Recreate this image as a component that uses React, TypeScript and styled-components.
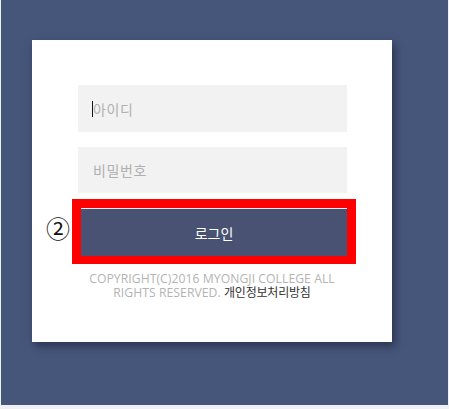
import React from "react";
import styled, { createGlobalStyle } from "styled-components";

const Global = createGlobalStyle`
  html, body { margin: 0; padding: 0; background: #eef0f4; }
  body { font-family: "Noto Sans CJK KR", "Noto Sans", sans-serif; }
  * { box-sizing: border-box; }
`;

const Page = styled.div`
  width: 447px;
  height: 405px;
  margin-left: 1px;
  background: #46557a;
  padding: 40px 0 0 31px;
`;

const Card = styled.div`
  width: 360px;
  height: 302px;
  background: #ffffff;
  box-shadow: 3px 4px 8px rgba(20, 25, 45, 0.55);
  padding-top: 45px;
  display: flex;
  flex-direction: column;
`;

const Field = styled.div<{ $h: number; $mt: number }>`
  position: relative;
  margin: ${(p) => p.$mt}px 0 0 46px;
  width: 269px;
  height: ${(p) => p.$h}px;
  background: #f2f2f2;
`;

const Input = styled.input`
  width: 100%;
  height: 100%;
  border: none;
  outline: none;
  background: transparent;
  padding: 0 0 0 15px;
  font-family: "Noto Sans CJK KR", sans-serif;
  font-size: 14px;
  letter-spacing: 0.6px;
  color: #333;
  &::placeholder {
    color: #b0b0b0;
  }
`;

const Caret = styled.span`
  position: absolute;
  left: 14px;
  top: 16px;
  width: 1px;
  height: 16px;
  background: #111;
`;

const Highlight = styled.div`
  position: relative;
  margin: 6px 0 0 40px;
  width: 284px;
  height: 65px;
  border-style: solid;
  border-color: #ff0000;
  border-width: 9px 9px 8px 9px;
`;

const Marker = styled.span`
  position: absolute;
  left: -35px;
  top: 8px;
  font-family: "Noto Sans CJK KR", sans-serif;
  font-size: 24px;
  line-height: 24px;
  color: #111;
`;

const Button = styled.button`
  display: block;
  width: 100%;
  height: 100%;
  border: none;
  border-top: 1px solid #e8eaf0;
  background: #4a5274;
  color: #ffffff;
  font-family: "Noto Sans CJK KR", sans-serif;
  font-size: 14px;
  padding: 0;
  cursor: pointer;
`;

const Copy = styled.p`
  margin: 8px 0 0 0;
  padding: 0 50px;
  text-align: center;
  font-family: "Open Sans", sans-serif;
  font-weight: 400;
  font-size: 12.2px;
  line-height: 13px;
  color: #b3b3b3;
  letter-spacing: 0.05px;
`;

const Policy = styled.a`
  display: inline-block;
  height: 13px;
  line-height: 13px;
  font-family: "Noto Sans CJK KR", sans-serif;
  font-size: 12px;
  letter-spacing: -0.2px;
  color: #333;
  text-decoration: none;
`;

export default function App() {
  return (
    <>
      <Global />
      <Page>
        <Card>
          <Field $h={47} $mt={0}>
            <Input placeholder="아이디" />
            <Caret />
          </Field>
          <Field $h={46} $mt={15}>
            <Input type="password" placeholder="비밀번호" />
          </Field>
          <Highlight>
            <Marker>②</Marker>
            <Button>로그인</Button>
          </Highlight>
          <Copy>
            COPYRIGHT(C)2016 MYONGJI COLLEGE ALL RIGHTS RESERVED.{" "}
            <Policy href="#">개인정보처리방침</Policy>
          </Copy>
        </Card>
      </Page>
    </>
  );
}
